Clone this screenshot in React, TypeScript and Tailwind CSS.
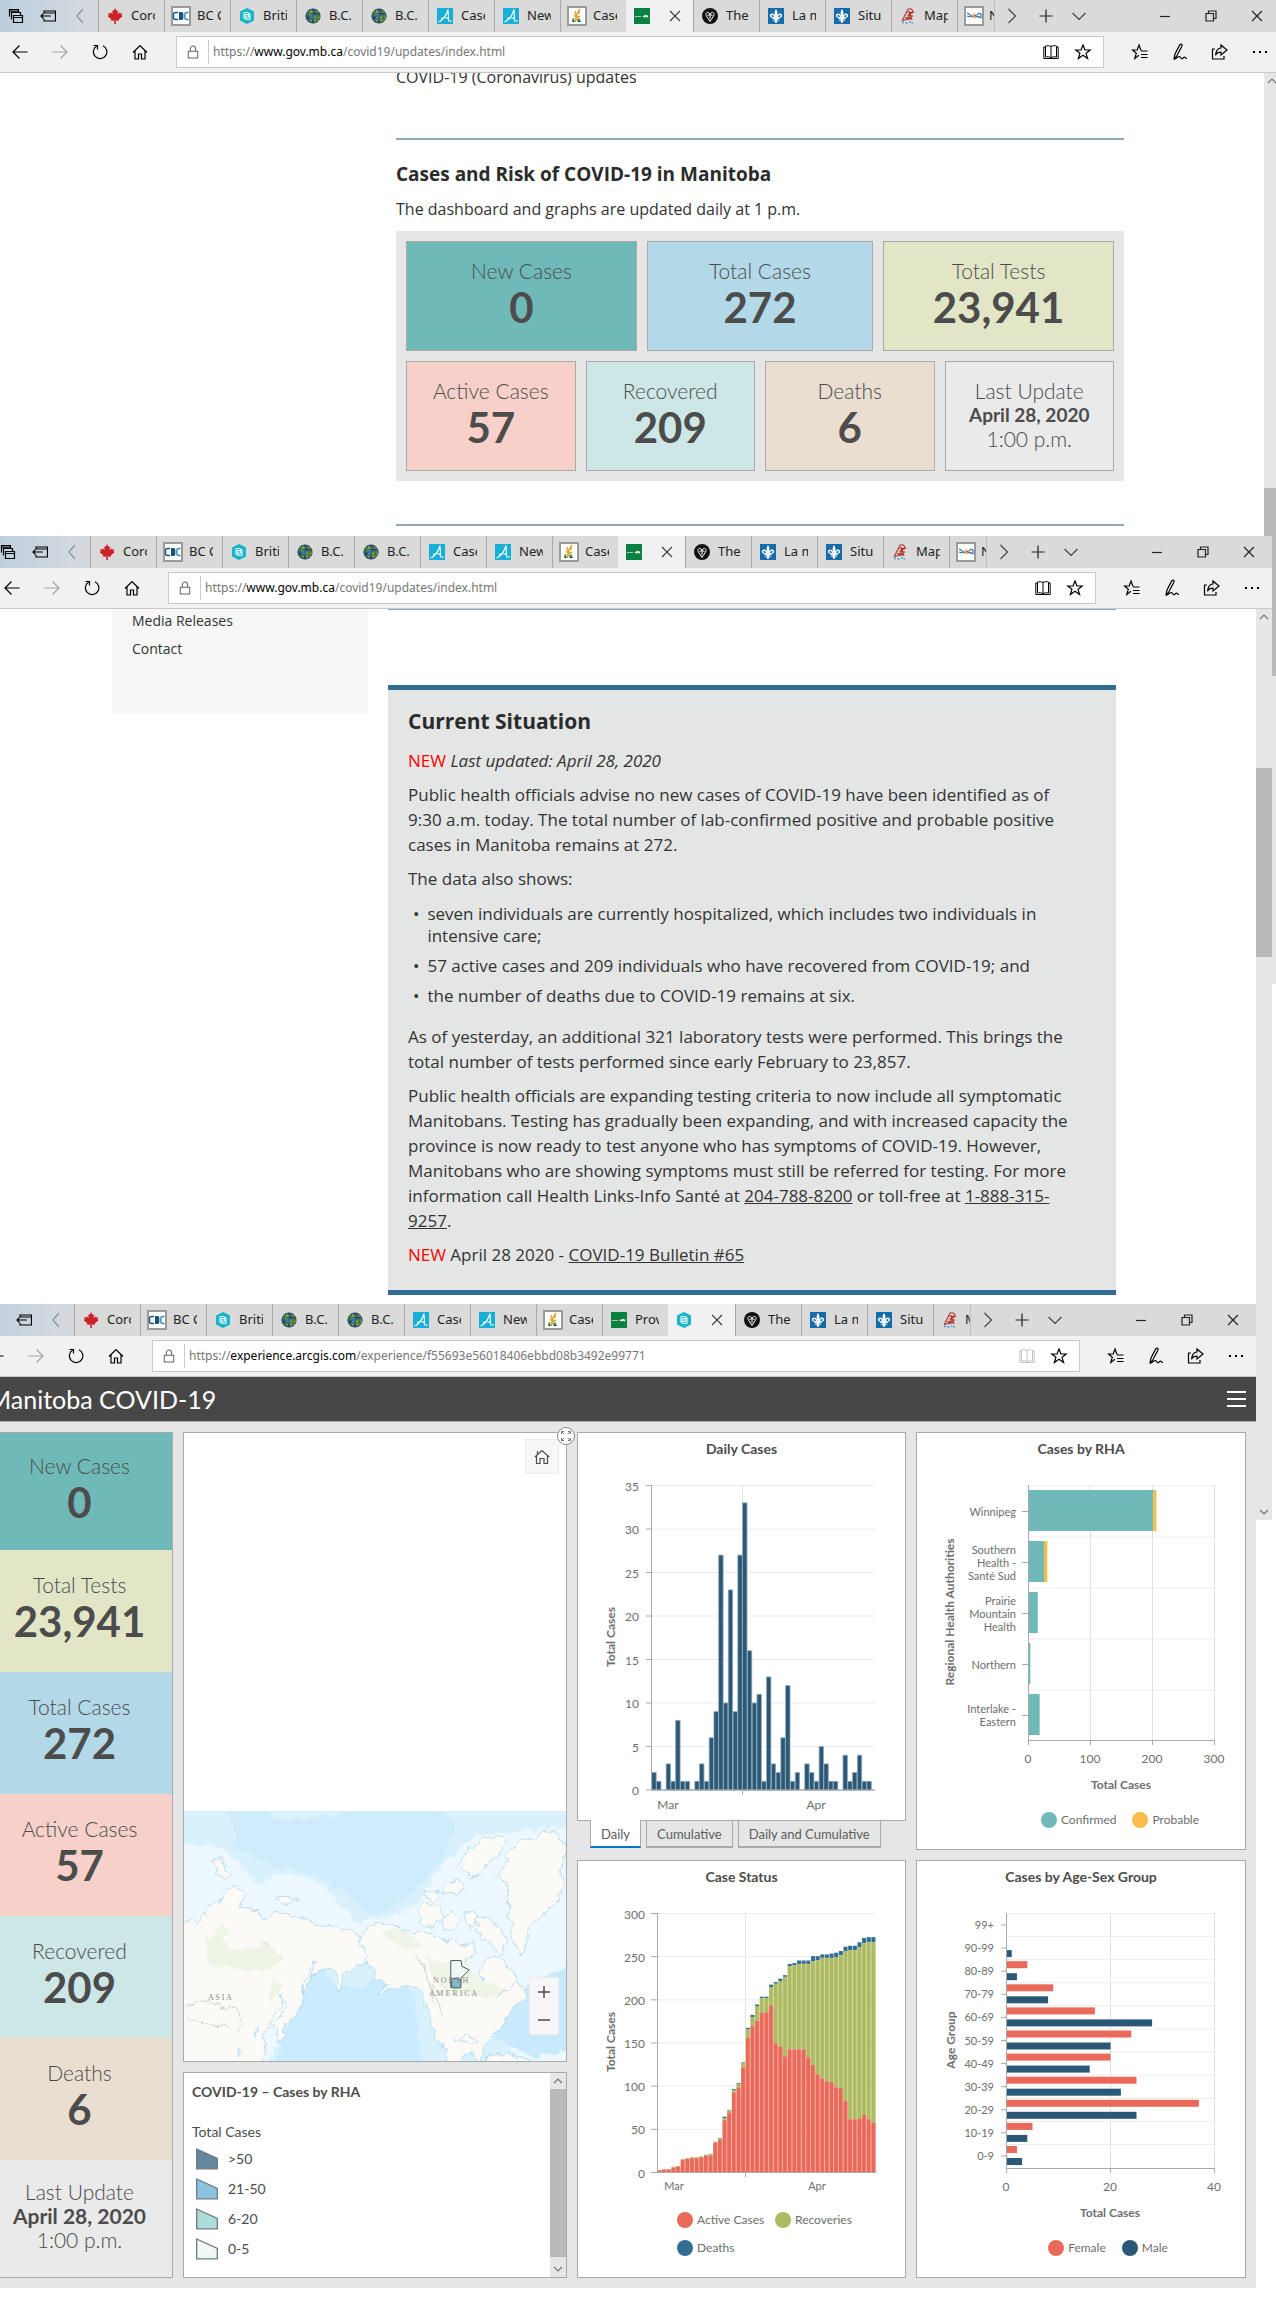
import React from "react";

/* ---------- Browser chrome ---------- */

type Icon = () => React.ReactElement;

const line = {
  fill: "none",
  stroke: "currentColor",
  strokeWidth: 1.2,
} as const;

const Maple: Icon = () => (
  <svg viewBox="0 0 16 16" className="h-4 w-4 shrink-0">
    <path
      d="M8 0l1.600 3 1.500-.8-.6 4 1.900-1.900.5 1.200 2.300-.4-.8 2.200 1.300.8-4 3.300.5 1.500-3.300-.6V16H7.300v-3.700L4 12.900l.5-1.500-4-3.300 1.300-.8L1 5.100l2.300.4.5-1.200 1.900 1.900-.6-4 1.500.8z"
      fill="#cb2026"
    />
  </svg>
);

const CdcIcon: Icon = () => (
  <svg viewBox="0 0 20 20" className="h-5 w-5 shrink-0">
    <rect x="1" y="1" width="18" height="18" fill="#fff" stroke="#9b9b9b" strokeWidth="2" />
    <path d="M7 6.500H4.500a2 2 0 0 0-2 2v3a2 2 0 0 0 2 2H7" fill="none" stroke="#19567c" strokeWidth="1.400" />
    <path d="M8 6h2.400a2 2 0 0 1 2 2v4a2 2 0 0 1-2 2H8z" fill="#19567c" />
    <path d="M17.500 6.500H15.800a2 2 0 0 0-2 2v3a2 2 0 0 0 2 2h1.700" fill="none" stroke="#3c87b6" strokeWidth="1.400" />
  </svg>
);

const HexIcon: Icon = () => (
  <svg viewBox="0 0 16 16" className="h-4 w-4 shrink-0">
    <path d="M8 0l7 3.500v9L8 16l-7-3.500v-9z" fill="#16b5c9" />
    <path d="M5 4.500v5.500l3 1.700M5 4.500h3M11 11.500V6L8 4.300M11 11.500H8M6.800 6.500h2.500v3H6.800z" fill="none" stroke="#e7fbfd" strokeWidth="1.200" />
  </svg>
);

const Globe: Icon = () => (
  <svg viewBox="0 0 16 16" className="h-4 w-4 shrink-0">
    <circle cx="8" cy="8" r="7.600" fill="#2f5878" />
    <path d="M2 5l3-3 3 1 1 3-3 2-3 1zM9 8l4-2 2 3-2 4-3 1-2-3zM10 2l3 1 1 2-3 0zM3 11l3-1 1 3-2 1z" fill="#78a83d" />
    <path d="M5 6l3-1 2 3-2 4-3-2z" fill="#3f8fc4" />
    <path d="M1 5.500h14M.5 8h15M1 10.800h14M8 .5v15M4.500 1.500q-2 6.500 0 13M11.500 1.500q2 6.500 0 13" fill="none" stroke="#1c2f3a" strokeWidth=".5" />
  </svg>
);

const AlbertaIcon: Icon = () => (
  <svg viewBox="0 0 16 16" className="h-4 w-4 shrink-0">
    <rect width="16" height="16" fill="#17afd6" />
    <path d="M1.500 14C6 12 9.500 7 11 1.500c.3 3 .3 8 .5 11 .8 1.200 2 .8 3 0M4 10.500c3-1 6-1 7.500.5" fill="none" stroke="#fff" strokeWidth="1.100" />
  </svg>
);

const WheatIcon: Icon = () => (
  <svg viewBox="0 0 20 20" className="h-5 w-5 shrink-0">
    <rect x="1" y="1" width="18" height="18" fill="#fff" stroke="#9b9b9b" strokeWidth="2" />
    <path d="M8 16c1-5 2-9 5-13M9 9l-1-4M10 8l3-2M9 11l-2-2M9 12l4-2M8.500 14l4-1" stroke="#e2a52f" strokeWidth="1.500" fill="none" />
    <path d="M12 12l2 4h-4zM6 11l2 5H5z" fill="#1a7a4a" />
  </svg>
);

const ManitobaIcon: Icon = () => (
  <svg viewBox="0 0 16 16" className="h-4 w-4 shrink-0">
    <rect width="16" height="16" fill="#0b8043" />
    <path d="M1 8.500h7" stroke="#cfe9da" strokeWidth="1" strokeDasharray="1 .4" />
    <path d="M9 7.800h1l1.500-1 1 .5 2 .4-.4 1.200H14v1h-.5V9h-3v1H10V9H9z" fill="#fff" />
  </svg>
);

const OntarioIcon: Icon = () => (
  <svg viewBox="0 0 16 16" className="h-4 w-4 shrink-0">
    <circle cx="8" cy="8" r="8" fill="#111" />
    <path d="M8 13.500L4.500 8c-1.500-2 0-4 2-3.500L8 6.500l1.500-2c2-.5 3.500 1.500 2 3.500zM8 6.500l-2.500 1M8 6.500l2.500 1M8 6.500V11" fill="none" stroke="#fff" strokeWidth="1" />
  </svg>
);

const FleurIcon: Icon = () => (
  <svg viewBox="0 0 16 16" className="h-4 w-4 shrink-0">
    <rect width="16" height="16" fill="#166ca8" />
    <path d="M8 1c1.800 2.200 1.800 4.500.6 8H7.400C6.200 5.500 6.200 3.200 8 1z" fill="#fff" />
    <path d="M9.300 9.200c.2-3 3-3.700 3.900-2.200.7 1.100-.2 2-1 1.700M6.700 9.200c-.2-3-3-3.700-3.900-2.200-.7 1.100.2 2 1 1.700" fill="none" stroke="#fff" strokeWidth="1.500" />
    <path d="M4.500 9.300h7v1.200h-7zM7.200 10.500h1.600L9.300 13 8 15l-1.300-2zM6.800 10.500L4.800 13M9.200 10.500l2 2.500" fill="#fff" stroke="#fff" strokeWidth=".7" />
  </svg>
);

const MapIcon: Icon = () => (
  <svg viewBox="0 0 16 16" className="h-4 w-4 shrink-0">
    <path d="M8 1c3-1 5 .5 5 3.500M8 1L2 13M7 4l6 .5-5 2.500 4 1-7 2 7 .5L2 12.500M9 3l3 9" fill="none" stroke="#b2322c" strokeWidth="1.100" />
    <path d="M2 14.500h2M5.500 15h2M9 14h1.500M11.500 15H13" stroke="#2f97d6" strokeWidth="1.500" />
  </svg>
);

const BannerIcon: Icon = () => (
  <svg viewBox="0 0 20 20" className="h-5 w-5 shrink-0">
    <rect x="1" y="1" width="18" height="18" fill="#fff" stroke="#9b9b9b" strokeWidth="2" />
    <path d="M3 7q2 .5 3 2t3 1M3 10q3 1.500 6 0M11 9.500q2 0 3-1.500t3 0M11 11q3-1 6 1M17 8v4" stroke="#2c6aa5" strokeWidth="1.200" fill="none" />
    <path d="M8.500 8l3 4M11.500 8l-3 4" stroke="#e98c2b" strokeWidth="1.200" />
  </svg>
);

const Cross: Icon = () => (
  <svg viewBox="0 0 12 12" className="h-3 w-3">
    <path d="M1 1l10 10M11 1L1 11" {...line} />
  </svg>
);

const Star = ({ lines = false }: { lines?: boolean }) => (
  <svg viewBox="0 0 18 18" className="h-[18px] w-[18px]">
    <path
      d={lines ? "M10.500 7H9.800L8 2 6.200 7H1.500l3.800 3.200L3.800 15.500 8 12.300M10 8h6.500M10 11.500h6.500M10 14.500h6.500" : "M9 2l2 5h5.200l-4.100 3.300 1.500 5.200L9 12.300l-4.600 3.200 1.500-5.200L1.800 7H7z"}
      {...line}
    />
  </svg>
);

const LeftIcons: Icon[] = [
  () => (
    <svg viewBox="0 0 16 16" className="h-4 w-4">
      <path d="M5.500 7.500h9v7h-9zM5.500 9.500h9M3.500 11.500v-7h9v3M1.500 8.500v-7h9v3M1.500 3.200h9" {...line} />
    </svg>
  ),
  () => (
    <svg viewBox="0 0 16 16" className="h-4 w-4">
      <path d="M4 5V3h11.500v10H4v-2M4 5h11.500M.5 8H11M3.500 5.500L1 8l2.500 2.500" {...line} />
    </svg>
  ),
  () => (
    <svg viewBox="0 0 16 16" className="h-4 w-4 text-[#8b949c]">
      <path d="M11 1L5 8l6 7" {...line} />
    </svg>
  ),
];

const NavIcons: [string, Icon][] = [
  ["Back", () => (<svg viewBox="0 0 16 16" className="h-4 w-4"><path d="M15.500 8H1M7.500 1.500L1 8l6.500 6.500" {...line} /></svg>)],
  ["Forward", () => (<svg viewBox="0 0 16 16" className="h-4 w-4 text-[#a3a3a3]"><path d="M.5 8H15M8.500 1.500L15 8l-6.500 6.500" {...line} /></svg>)],
  ["Refresh", () => (<svg viewBox="0 0 16 16" className="h-4 w-4"><path d="M11 1.800A6.700 6.700 0 1 1 4.500 2.200M1.500 1.500h4v4" {...line} /></svg>)],
  ["Home", () => (<svg viewBox="0 0 16 16" className="h-4 w-4"><path d="M1 8.500L8 1.500l7 7M3 7v8h3.500v-5h3v5H13V7" {...line} /></svg>)],
];

const ToolIcons: [string, Icon][] = [
  ["Favorites", () => <Star lines />],
  ["Notes", () => (<svg viewBox="0 0 18 18" className="h-[18px] w-[18px]"><path d="M3 16l1-5L9 1.500c1.500-1 2.500 0 2 1.500L5.500 13.500 3 16c2 .5 3-2 5-2.500 2-.3 1 2.500 3 2.200 1.500-.2 1-1.700 2.500-1.500 1.200.1 1 1.300 2.500 1.300" {...line} /></svg>)],
  ["Share", () => (<svg viewBox="0 0 18 18" className="h-[18px] w-[18px]"><path d="M4 6H1.500v10H13v-3M10 2l6 5-6 5V9.200c-3 0-4.500 1-5.500 3C5 8 7 5.200 10 5z" {...line} /></svg>)],
  ["More", () => (<svg viewBox="0 0 18 18" className="h-[18px] w-[18px]"><path d="M2 9h2M8 9h2M14 9h2" stroke="currentColor" strokeWidth="2" /></svg>)],
];

type TabItem = { icon: Icon; label: string; active?: boolean; last?: boolean };

const commonTabs: TabItem[] = [
  { icon: Maple, label: "Coro" },
  { icon: CdcIcon, label: "BC C" },
  { icon: HexIcon, label: "Briti" },
  { icon: Globe, label: "B.C." },
  { icon: Globe, label: "B.C." },
  { icon: AlbertaIcon, label: "Case" },
  { icon: AlbertaIcon, label: "New" },
  { icon: WheatIcon, label: "Case" },
];

const updatesTabs: TabItem[] = [
  ...commonTabs,
  { icon: ManitobaIcon, label: "", active: true },
  { icon: OntarioIcon, label: "The" },
  { icon: FleurIcon, label: "La m" },
  { icon: FleurIcon, label: "Situa" },
  { icon: MapIcon, label: "Map" },
  { icon: BannerIcon, label: "N", last: true },
];

const dashboardTabs: TabItem[] = [
  ...commonTabs,
  { icon: ManitobaIcon, label: "Prov" },
  { icon: HexIcon, label: "", active: true },
  { icon: OntarioIcon, label: "The" },
  { icon: FleurIcon, label: "La m" },
  { icon: FleurIcon, label: "Situa" },
  { icon: MapIcon, label: "M", last: true },
];

function Tab({ icon: TabIcon, label, active, last }: TabItem) {
  if (active) {
    return (
      <div className="flex w-[67px] shrink-0 items-center justify-between bg-[#f1f1f1] pr-3 pl-2">
        <TabIcon />
        <button aria-label="Close tab" className="text-[#444]"><Cross /></button>
      </div>
    );
  }
  return (
    <button
      className={`flex shrink-0 items-center border-l border-[#a9a9a9] ${last ? "w-[38px] border-r border-r-[#c0c0c0]" : "w-[66px] pr-2"}`}
    >
      <span className={`flex shrink-0 items-center justify-center ${last ? "w-[31px]" : "w-8"}`}><TabIcon /></span>
      <span className={`overflow-hidden text-left whitespace-nowrap ${last ? "w-[5px]" : "w-6"}`}>{label}</span>
    </button>
  );
}

type BrowserProps = { tabs: TabItem[]; url: [string, string, string]; readerOff?: boolean };

function BrowserBar({ tabs, url, readerOff }: BrowserProps) {
  return (
    <header className="font-['Noto_Sans',sans-serif] text-black">
      <div className="flex h-8 bg-[#dadada] text-[13px] text-[#222]">
        <div className="flex w-[98px] shrink-0 items-center bg-linear-to-r from-[#bccfdf] to-[#d6dade] text-black">
          {LeftIcons.map((I, i) => (
            <button key={i} aria-label={["Set aside tabs", "Restore tabs", "Scroll tabs left"][i]} className="flex w-8 justify-center"><I /></button>
          ))}
        </div>
        {tabs.map((t, i) => <Tab key={i} {...t} />)}
        <button aria-label="Scroll tabs right" className="flex w-[34px] items-center justify-center">
          <svg viewBox="0 0 16 16" className="h-4 w-4 text-[#444]"><path d="M4.500 1l7 7-7 7" {...line} /></svg>
        </button>
        <button aria-label="New tab" className="flex w-[34px] items-center justify-center">
          <svg viewBox="0 0 14 14" className="h-[14px] w-[14px]"><path d="M7 .5v13M.5 7h13" {...line} /></svg>
        </button>
        <button aria-label="Tab previews" className="flex w-8 items-center justify-center">
          <svg viewBox="0 0 14 14" className="h-[14px] w-[14px] text-[#444]"><path d="M.5 4L7 10.500 13.500 4" {...line} /></svg>
        </button>
        <div className="ml-auto flex">
          <button aria-label="Minimize" className="flex w-[46px] items-center justify-center"><svg viewBox="0 0 12 12" className="h-3 w-3"><path d="M1 6.500h10" {...line} /></svg></button>
          <button aria-label="Restore" className="flex w-[46px] items-center justify-center"><svg viewBox="0 0 12 12" className="h-3 w-3"><path d="M1 3.500h7.500V11H1zM3.500 3.500V1H11v7.500H8.500" {...line} /></svg></button>
          <button aria-label="Close" className="flex w-[46px] items-center justify-center"><Cross /></button>
        </div>
      </div>
      <div className="flex h-[41px] items-center border-b border-[#c9c9c9] bg-[#f1f1f1]">
        {NavIcons.map(([name, I]) => (
          <button key={name} aria-label={name} className="flex w-10 shrink-0 justify-center"><I /></button>
        ))}
        <div className="mx-4 flex h-8 min-w-0 flex-1 items-center border border-[#c9c9c9] bg-white pr-1">
          <span className="flex h-6 w-8 shrink-0 items-center justify-center border-r border-[#c9c9c9] text-[#666]">
            <svg viewBox="0 0 14 16" className="h-[14px] w-3"><path d="M1.500 7h11v8h-11zM4 7V4a3 3 0 0 1 6 0v3" {...line} /></svg>
          </span>
          <div role="textbox" aria-label="Address" tabIndex={0} className="min-w-0 flex-1 truncate pl-1 text-[12px] text-[#777]">
            {url[0]}<span className="text-black">{url[1]}</span>{url[2]}
          </div>
          <button aria-label="Reading view" className={`flex w-8 justify-center ${readerOff ? "text-[#c4c4c4]" : ""}`}>
            <svg viewBox="0 0 16 16" className="h-4 w-4"><path d="M8 2.500C6 1.500 4 1.500 2.500 2v11c1.500-.4 4-.4 5.500.7 1.500-1.100 4-1.100 5.500-.7V2C12 1.500 10 1.500 8 2.500zm0 0v11M2.500 3H.8v11.500h14.400V3h-1.700" {...line} strokeWidth={1} /></svg>
          </button>
          <button aria-label="Add to favorites" className="flex w-8 justify-center"><Star /></button>
        </div>
        {ToolIcons.map(([name, I]) => (
          <button key={name} aria-label={name} className="flex w-10 shrink-0 justify-center"><I /></button>
        ))}
      </div>
    </header>
  );
}

const ScrollArrow = ({ down = false }: { down?: boolean }) => (
  <svg viewBox="0 0 16 16" className="h-4 w-4 shrink-0 text-[#777]">
    <path d={down ? "M4 6l4 4 4-4" : "M4 10l4-4 4 4"} {...line} />
  </svg>
);

/* ---------- Summary cards ---------- */

type CardData = { label: string; value: string; time?: string; className: string };

const card: Record<string, CardData> = {
  fresh: { label: "New Cases", value: "0", className: "bg-[#6fbab8]" },
  cases: { label: "Total Cases", value: "272", className: "bg-[#b3d8e8]" },
  tests: { label: "Total Tests", value: "23,941", className: "bg-[#e2e6c7]" },
  active: { label: "Active Cases", value: "57", className: "bg-[#f7d0ca]" },
  recovered: { label: "Recovered", value: "209", className: "bg-[#cde7e6]" },
  deaths: { label: "Deaths", value: "6", className: "bg-[#e9decf]" },
  update: { label: "Last Update", value: "April 28, 2020", time: "1:00 p.m.", className: "bg-[#eaeaea]" },
};

function CardText({ data, wide = false }: { data: CardData; wide?: boolean }) {
  return (
    <div className="text-center font-['Lato',sans-serif] text-[21px] leading-6 text-[#4c4c4c]">
      <p className="font-light">{data.label}</p>
      {data.time ? (
        <>
          <p className={`font-bold whitespace-nowrap ${wide ? "text-[21px]" : "text-[19px]"}`}>{data.value}</p>
          <p className="font-light">{data.time}</p>
        </>
      ) : (
        <p className="text-[42px] leading-[48px] font-bold">{data.value}</p>
      )}
    </div>
  );
}

const Card = ({ data }: { data: CardData }) => (
  <div className={`h-[110px] border border-[#a9a9a9] pt-[17px] ${data.className}`}>
    <CardText data={data} />
  </div>
);

/* ---------- Charts ---------- */

const Title = ({ children }: { children: React.ReactNode }) => (
  <h3 className="h-[42px] pt-[6px] text-center text-[14px] leading-5 font-bold text-[#4c4c4c]">{children}</h3>
);

const Panel = ({ children, className = "" }: { children: React.ReactNode; className?: string }) => (
  <section className={`border border-[#a9a9a9] bg-white ${className}`}>{children}</section>
);

const Dot = ({ color, label }: { color: string; label: string }) => (
  <li className="flex items-center gap-1 text-[12px] leading-4 text-[#6e6e6e]">
    <span className={`h-4 w-4 rounded-full ${color}`} />
    {label}
  </li>
);

const AxisName = ({ x, y, children }: { x: number; y: number; children: string }) => (
  <text x={x} y={y} transform={`rotate(-90 ${x} ${y})`} textAnchor="middle" className="fill-[#6e6e6e] text-[12px] font-bold">{children}</text>
);

const daily = [2, 1, 0, 3, 1, 8, 1, 1, 0, 1, 3, 1, 6, 9, 27, 10, 23, 9, 27, 33, 16, 10, 11, 1, 13, 3, 2, 6, 12, 1, 2, 0, 3, 2, 1, 5, 3, 1, 1, 0, 4, 1, 2, 4, 1, 1];

function DailyChart() {
  const step = 4.78;
  return (
    <svg viewBox="0 0 327 345" className="block w-full fill-[#6e6e6e] text-[12px]">
      {[0, 5, 10, 15, 20, 25, 30, 35].map((v) => {
        const y = 315 - v * 8.7;
        return (
          <g key={v}>
            <path d={`M74 ${y}H297`} stroke={v ? "#ececec" : "#a9a9a9"} />
            <path d={`M68 ${y}H74`} stroke="#a9a9a9" />
            <text x="61" y={y + 5} textAnchor="end">{v}</text>
          </g>
        );
      })}
      <path d="M164.500 10V315" stroke="#e4e4e4" />
      {daily.map((v, i) => v > 0 && (
        <rect key={i} x={73.8 + i * step} y={315 - v * 8.7} width={step - 0.4} height={v * 8.7} fill="#2a5876" stroke="#8fa9b9" strokeWidth=".8" />
      ))}
      <path d="M73.500 10V315H297M164.500 315v5" fill="none" stroke="#a9a9a9" />
      <text x="90" y="334" textAnchor="middle">Mar</text>
      <text x="238" y="334" textAnchor="middle">Apr</text>
      <AxisName x={37} y={162}>Total Cases</AxisName>
    </svg>
  );
}

const rha: [string[], number, number][] = [
  [["Winnipeg"], 201, 5],
  [["Southern", "Health -", "Santé Sud"], 25, 5],
  [["Prairie", "Mountain", "Health"], 15, 0],
  [["Northern"], 3, 0],
  [["Interlake -", "Eastern"], 18, 0],
];

function RhaChart() {
  return (
    <svg viewBox="0 0 328 325" className="block w-full fill-[#6e6e6e] text-[12px]">
      {[0, 100, 200, 300].map((v) => (
        <g key={v}>
          <path d={`M${111.5 + v * 0.62} 10V265`} stroke="#e0e0e0" />
          <path d={`M${111.5 + v * 0.62} 265v5`} stroke="#a9a9a9" />
          <text x={111 + v * 0.62} y="288" textAnchor="middle">{v}</text>
        </g>
      ))}
      {rha.map(([names, confirmed, probable], i) => {
        const top = 10.5 + i * 51;
        return (
          <g key={i}>
            <path d={`M111 ${top + 0.5}H297`} stroke="#ececec" />
            <path d={`M105 ${top + 26}H111`} stroke="#a9a9a9" />
            <rect x="111.500" y={top + 4.5} width={confirmed * 0.62} height="41" fill="#6fbab8" />
            <rect x={111.5 + confirmed * 0.62} y={top + 4.5} width={probable * 0.66} height="41" fill="#f7bc4b" />
            {names.map((n, j) => (
              <text key={n} x="99" y={top + 30 + (j - (names.length - 1) / 2) * 13} textAnchor="end" className="text-[11px]">{n}</text>
            ))}
          </g>
        );
      })}
      <path d="M111.500 10V265.500H297" fill="none" stroke="#a9a9a9" />
      <text x="204" y="314" textAnchor="middle" className="font-bold">Total Cases</text>
      <AxisName x={37} y={137}>Regional Health Authorities</AxisName>
    </svg>
  );
}

const active = [2, 3, 3, 5, 6, 14, 15, 16, 16, 17, 19, 19, 34, 37, 60, 69, 92, 98, 121, 155, 169, 175, 184, 185, 193, 149, 145, 134, 142, 142, 142, 142, 133, 124, 113, 108, 105, 104, 98, 97, 82, 61, 61, 62, 66, 61, 57];
const resolved = [2, 3, 3, 6, 7, 15, 16, 17, 17, 18, 20, 21, 35, 38, 62, 71, 95, 102, 126, 165, 179, 192, 201, 201, 214, 218, 221, 226, 238, 239, 241, 241, 241, 244, 245, 248, 248, 248, 249, 251, 256, 257, 257, 260, 265, 266, 266];
const total = [2, 3, 3, 6, 7, 15, 16, 17, 17, 18, 20, 21, 35, 39, 64, 72, 96, 103, 127, 167, 182, 194, 203, 203, 217, 220, 224, 228, 241, 242, 245, 245, 245, 250, 250, 252, 252, 253, 254, 256, 261, 262, 262, 266, 271, 272, 272];

function StatusChart() {
  const step = 4.65;
  const k = 259 / 300;
  return (
    <svg viewBox="0 0 327 305" className="block w-full fill-[#6e6e6e] text-[12px]">
      {[0, 50, 100, 150, 200, 250, 300].map((v) => {
        const y = 269.5 - v * k;
        return (
          <g key={v}>
            <path d={`M79 ${y}H297`} stroke={v ? "#ececec" : "#a9a9a9"} />
            <path d={`M73 ${y}H79`} stroke="#a9a9a9" />
            <text x="67" y={y + 5} textAnchor="end">{v}</text>
          </g>
        );
      })}
      <path d="M167.500 10V269" stroke="#e4e4e4" />
      {total.map((t, i) => {
        const x = 79.5 + i * step;
        return (
          <g key={i}>
            <rect x={x} y={269 - t * k} width={step - 0.6} height={(t - resolved[i]) * k} fill="#326e92" />
            <rect x={x} y={269 - resolved[i] * k} width={step} height={(resolved[i] - active[i]) * k} fill="#d3d9a9" />
            <rect x={x} y={269 - resolved[i] * k} width={step - 0.9} height={(resolved[i] - active[i]) * k} fill="#aebb62" />
            <rect x={x} y={269 - active[i] * k} width={step} height={active[i] * k} fill="#f3b0a5" />
            <rect x={x} y={269 - active[i] * k} width={step - 0.9} height={active[i] * k} fill="#e96a5b" />
          </g>
        );
      })}
      <path d="M79.500 10V269.500H298M167.500 269v5" fill="none" stroke="#a9a9a9" />
      <text x="96" y="287" textAnchor="middle" className="text-[11px]">Mar</text>
      <text x="239" y="287" textAnchor="middle" className="text-[11px]">Apr</text>
      <AxisName x={37} y={139}>Total Cases</AxisName>
    </svg>
  );
}

const ages: [string, number, number][] = [
  ["99+", 0, 0], ["90-99", 0, 1], ["80-89", 4, 2], ["70-79", 9, 8], ["60-69", 17, 28], ["50-59", 24, 20],
  ["40-49", 20, 16], ["30-39", 25, 22], ["20-29", 37, 25], ["10-19", 5, 4], ["0-9", 2, 3],
];

function AgeChart() {
  return (
    <svg viewBox="0 0 328 325" className="block w-full fill-[#6e6e6e] text-[12px]">
      {[0, 20, 40].map((v) => (
        <g key={v}>
          <path d={`M${89.5 + v * 5.2} 10V265`} stroke="#e0e0e0" />
          <path d={`M${89.5 + v * 5.2} 265v5`} stroke="#a9a9a9" />
          <text x={89 + v * 5.2} y="288" textAnchor="middle">{v}</text>
        </g>
      ))}
      {ages.map(([name, f, m], i) => {
        const top = 10.5 + i * 23.1;
        return (
          <g key={name}>
            <path d={`M89 ${top}H297`} stroke="#ececec" />
            <path d={`M84 ${top + 11.5}H89`} stroke="#a9a9a9" />
            <rect x="89.500" y={top + 1.5} width={f * 5.2} height="7" fill="#e96a5b" />
            <rect x="89.500" y={top + 13.5} width={m * 5.2} height="7" fill="#2a5876" />
            <text x="77" y={top + 15.5} textAnchor="end" className="text-[11px]">{name}</text>
          </g>
        );
      })}
      <path d="M89.500 10V265.500H297" fill="none" stroke="#a9a9a9" />
      <text x="193" y="314" textAnchor="middle" className="font-bold">Total Cases</text>
      <AxisName x={38} y={137}>Age Group</AxisName>
    </svg>
  );
}

/* ---------- Map ---------- */

function WorldMap() {
  const coast = { fill: "#fbfaf7", stroke: "#b5dcee", strokeWidth: 1, vectorEffect: "non-scaling-stroke" } as const;
  return (
    <svg viewBox="0 0 382 250" className="block w-full bg-[#d9f1fd]">
      <filter id="rough" x="0" y="0" width="100%" height="100%">
        <feTurbulence type="fractalNoise" baseFrequency="0.09" numOctaves="3" seed="4" result="noise" />
        <feDisplacementMap in="SourceGraphic" in2="noise" scale="11" xChannelSelector="R" yChannelSelector="G" />
      </filter>
      <g filter="url(#rough)">
        <g transform="scale(0.37 0.582) translate(-497 -707)">
          <path d="M440 650H1600V1200H440z" fill="#d9f1fd" />
          <path d="M440 760L600 770 690 830 760 815 830 820 900 850 960 900 1040 890 1130 870 1190 800 1290 750 1600 730V1200H1440L1330 1060 1200 1100 1120 1000 1040 960 960 960 880 950 800 1040 760 1090 690 1200H440z" fill="#ecf8fe" />
          <path d="M590 650L760 725 900 715 1080 650 1230 730 1200 790 1110 850 1010 890 940 850 850 815 740 800 640 770z" fill="#cfecfd" />
          <path d="M850 960L900 1005 980 1010 1060 965 1120 1030 1150 1200H720L780 1060z" fill="#cbebfe" />
          <path d="M1600 960L1440 1000 1330 1050 1340 1100 1440 1130 1600 1110z" fill="#c9eafd" />
          <path {...coast} d="M440 905l82-12 15 10 20-25 30-14 20-20 35-5 20 14-10 18 40 8 20 14 30-10 40 5 45 2 25 14 40-4 60 12 40 16 25 12-30 10 10 14-35 10-28 14-15 28-14-6 8-24-20-6-22 4-36 6-20 26-4 34-22 14-20 8-4 28-14 2-6-20-24-4-8 18 10 24-16 26-26 16-14 26-10-2-22-20-14 12-16-24-30-8-18 30-80 6z" />
          <path {...coast} d="M972 935l16-24 22-12 38 3 40 8 34 6 40 2 36 14 24-4 22 10 30-8 14 12-12 14-24 12-6 22 26 12 24 4 8 18 12-12-6-26 4-20 30 6 22 16 24-2 18 26 22 18-30 10-24 10-8 18-22 8-18 22-24 16-4 26-20-16-22 2-18 16 2 18 16 10 20-2 12 12 20 10h-24l-40-14-26-20-18-38-26-24-14-40-12-24-20-18-36-8-28 8-40 10 16-16-22-10z" />
          <path {...coast} d="M1338 822l24-22 10-24 30-16 50-12 44-6 26 14 4 24-8 26 4 34-16 26-30 14-26 14-24 18-12 42-18-6-14-40-8-36-2-36-18-18z" />
          <path {...coast} d="M1240 800l30-30 30-14 40-2 26 8-14 22-34 12-22 18-30 10zM1130 880l20-14 34 4 14 14-20 20-40-4zM1190 890l34-10 20 14-20 14-26 4zM1200 830l34-6 18 16-26 10-30-4zM1290 890l34 4 26 14 20 28-16 18-34-18-26-20zM1150 850l28-10 22 10-30 10zM1255 885l25-6 10 16-20 14zM578 795l18-6 14 16 22 12-20 6-24-8zM745 860l24-8 34 8-26 8zM1296 980l28-24 30 6 24 20 16 10-20 22-38 10-24-20z" />
          <path {...coast} d="M762 1025l10 20-10 16-26 16-8-4 22-18zM845 968l8-2-14 30-12 18-8-2 16-24zM690 1085l6-4-4 14zM640 1110l10 6-6 14zM1230 1098l28-8 34 12-10 6zM1320 1130l30-8 60 8 30 10h-120z" />
          <path d="M555 925l50-20 20 14-30 12 60 16 60-10 50 22-30 18-70 6-60-10-40 6zM740 990l24 14-10 24-28 6zM1030 915l60-4 50 24-20 14-50-14zM1150 955l50 14 60-2 40 30 60 16-40 18-60-12-30 4-50-24z" fill="#eff5e6" />
          <path d="M500 1044l38-14 52 10 56 12 20 20-24 14M510 1062l50 12 60 6M700 930l40 14M1120 950l30 40 22 44M1140 970l32 50 24 40" fill="none" stroke="#d9d2ca" strokeWidth="1" vectorEffect="non-scaling-stroke" />
        </g>
      </g>
      <g transform="scale(0.37 0.582) translate(-497 -707)" stroke="#4c5a60">
        <path d="M1218 964h28l2 10 20 6-22 14-4 16h-24z" fill="#eef7f4" vectorEffect="non-scaling-stroke" />
        <path d="M1219 996l14-2 13 4-1 13h-24z" fill="#7db8c4" vectorEffect="non-scaling-stroke" />
      </g>
      <g className="fill-[#8b8b8b] font-['Liberation_Serif',serif] text-[8px]">
        <text x="24" y="189">A S I A</text>
        <text x="249" y="172">N O R T H</text>
        <text x="245" y="185">A M E R I C A</text>
      </g>
    </svg>
  );
}

const legend: [string, string][] = [[">50", "#64869f"], ["21-50", "#8bc3e0"], ["6-20", "#abdcd8"], ["0-5", "#eff8f5"]];

function MapColumn() {
  return (
    <div className="flex min-w-0 flex-col gap-[10px]">
      <Panel className="relative flex flex-1 flex-col justify-end">
        <WorldMap />
        <button aria-label="Default extent" className="absolute top-[6px] right-[7px] flex h-[35px] w-[34px] items-center justify-center border border-[#ebebeb] bg-[#f7f7f7] text-[#4c4c4c]">
          <svg viewBox="0 0 16 16" className="h-[18px] w-4"><path d="M.8 8L8 1.500 15.200 8M2.500 6.800V14.500H6V9.500h4v5h3.500V6.800M3.500 5.500V2" {...line} /></svg>
        </button>
        <button aria-label="Expand" className="absolute -top-[6px] -right-[9px] flex h-[18px] w-[18px] items-center justify-center rounded-full border border-[#8a8a8a] bg-white text-[#777]">
          <svg viewBox="0 0 12 12" className="h-3 w-3"><path d="M1.500 4V1.500H4M8 1.500h2.500V4M10.500 8v2.500H8M4 10.500H1.500V8M1.500 1.500l2.700 2.700M10.500 1.500L7.800 4.200M10.500 10.500L7.800 7.800M1.500 10.500l2.700-2.700" {...line} strokeWidth={1} /></svg>
        </button>
        <div className="absolute right-[7px] bottom-[26px] flex w-[30px] flex-col border border-[#ebebeb] bg-[#f7f7f7] text-[#4c4c4c]">
          <button aria-label="Zoom in" className="flex h-7 items-center justify-center"><svg viewBox="0 0 12 12" className="h-3 w-3"><path d="M6 0v12M0 6h12" stroke="currentColor" strokeWidth="1.500" /></svg></button>
          <button aria-label="Zoom out" className="flex h-7 items-center justify-center"><svg viewBox="0 0 12 12" className="h-3 w-3"><path d="M0 6h12" stroke="currentColor" strokeWidth="1.500" /></svg></button>
        </div>
      </Panel>
      <Panel className="flex h-[206px]">
        <div className="flex-1 pl-2 text-[14px] leading-5 text-[#4c4c4c]">
          <h3 className="mt-[9px] font-bold">COVID-19 – Cases by RHA</h3>
          <p className="mt-5">Total Cases</p>
          <ul className="mt-[2px] pl-1">
            {legend.map(([name, color]) => (
              <li key={name} className="flex h-[30px] items-center gap-[10px]">
                <svg viewBox="0 0 22 22" className="h-[22px] w-[22px]"><path d="M.7 1l20.600 9.500V20.800H.7z" fill={color} stroke="#6e7a80" strokeWidth="1.300" /></svg>
                {name}
              </li>
            ))}
          </ul>
        </div>
        <div className="flex w-4 flex-col bg-[#e6e6e6]">
          <ScrollArrow />
          <div className="mb-1 flex-1 bg-[#b9b9b9]" />
          <ScrollArrow down />
        </div>
      </Panel>
    </div>
  );
}

/* ---------- Pages ---------- */

function RiskPage() {
  return (
    <div className="overflow-hidden">
      <div className="-mr-1">
        <BrowserBar tabs={updatesTabs} url={["https://", "www.gov.mb.ca", "/covid19/updates/index.html"]} />
        <div className="flex">
          <main className="flex-1 overflow-hidden font-['Open_Sans',sans-serif] text-[16px] leading-[25px] text-[#333]">
            <div className="mx-auto max-w-[1024px] pr-5 pb-[10px] pl-[276px]">
              <p className="-mt-2">COVID-19 (Coronavirus) updates</p>
              <hr className="mt-12 border-t-2 border-[#93a9ba]" />
              <h2 className="mt-5 text-[19px] leading-7 font-bold text-[#2b2b2b]">Cases and Risk of COVID-19 in Manitoba</h2>
              <p className="mt-[9px]">The dashboard and graphs are updated daily at 1 p.m.</p>
              <div className="mt-[9px] space-y-[10px] bg-[#e6e6e6] p-[10px]">
                <div className="grid grid-cols-[231fr_226fr_231fr] gap-[10px]">
                  <Card data={card.fresh} /><Card data={card.cases} /><Card data={card.tests} />
                </div>
                <div className="grid grid-cols-4 gap-[10px]">
                  <Card data={card.active} /><Card data={card.recovered} /><Card data={card.deaths} /><Card data={card.update} />
                </div>
              </div>
              <hr className="mt-[43px] border-t-2 border-[#93a9ba]" />
            </div>
          </main>
          <div className="flex w-4 flex-col justify-between bg-[#e6e6e6]">
            <ScrollArrow />
            <div className="h-12 bg-[#b9b9b9]" />
          </div>
        </div>
      </div>
    </div>
  );
}

const New = () => <span className="text-[#f00]">NEW</span>;

function SituationPage() {
  return (
    <div className="flex">
      <div className="min-w-0 flex-1 overflow-hidden">
        <div className="-ml-2">
          <BrowserBar tabs={updatesTabs} url={["https://", "www.gov.mb.ca", "/covid19/updates/index.html"]} />
          <div className="flex">
            <main className="flex-1 font-['Open_Sans',sans-serif] text-[17px] leading-[25px] text-[#333]">
              <div className="mx-auto grid max-w-[1024px] grid-cols-[256px_1fr] items-start gap-5 pr-5 pb-[9px]">
                <nav className="flex flex-col gap-1 bg-[#f7f7f7] pb-[53px] pl-5 text-[14px] leading-6">
                  <a href="#media">Media Releases</a>
                  <a href="#contact">Contact</a>
                </nav>
                <div>
                  <hr className="border-[#93a9ba]" />
                  <article className="mt-[75px] border-y-[5px] border-[#326e92] bg-[#e4e6e5] pt-[17px] pr-[38px] pb-[23px] pl-5">
                    <h2 className="text-[21px] leading-7 font-bold text-[#2b2b2b]">Current Situation</h2>
                    <p className="mt-[13px]"><New /> <em>Last updated: April 28, 2020</em></p>
                    <p className="mt-[9px]">Public health officials advise no new cases of COVID-19 have been identified as of 9:30 a.m. today. The total number of lab-confirmed positive and probable positive cases in Manitoba remains at 272.</p>
                    <p className="mt-[9px]">The data also shows:</p>
                    <ul className="mt-3 space-y-2 leading-[22px]">
                      {[
                        "seven individuals are currently hospitalized, which includes two individuals in intensive care;",
                        "57 active cases and 209 individuals who have recovered from COVID-19; and",
                        "the number of deaths due to COVID-19 remains at six.",
                      ].map((t) => (
                        <li key={t} className="flex gap-2 pl-[5px]"><span>•</span><span>{t}</span></li>
                      ))}
                    </ul>
                    <p className="mt-[17px]">As of yesterday, an additional 321 laboratory tests were performed. This brings the total number of tests performed since early February to 23,857.</p>
                    <p className="mt-[9px]">Public health officials are expanding testing criteria to now include all symptomatic Manitobans. Testing has gradually been expanding, and with increased capacity the province is now ready to test anyone who has symptoms of COVID-19. However, Manitobans who are showing symptoms must still be referred for testing. For more information call Health Links-Info Santé at <a href="tel:2047888200" className="underline">204-788-8200</a> or toll-free at <a href="tel:18883159257" className="underline">1-888-315-9257</a>.</p>
                    <p className="mt-[9px]"><New /> April 28 2020 - <a href="#bulletin" className="underline">COVID-19 Bulletin #65</a></p>
                  </article>
                </div>
              </div>
            </main>
            <div className="flex w-4 flex-col bg-[#e6e6e6]">
              <ScrollArrow />
              <div className="mt-[143px] h-[189px] bg-[#b9b9b9]" />
            </div>
          </div>
        </div>
      </div>
      <div className="w-1">
        <div className="h-[140px] bg-[#b9b9b9]" />
        <div className="h-[308px] bg-[#e6e6e6]" />
      </div>
    </div>
  );
}

const figures = [card.fresh, card.tests, card.cases, card.active, card.recovered, card.deaths, card.update];

function DashboardPage() {
  return (
    <div className="flex">
      <div className="min-w-0 flex-1 overflow-hidden">
        <div className="-ml-6 font-['Lato',sans-serif]">
          <BrowserBar tabs={dashboardTabs} readerOff url={["https://", "experience.arcgis.com", "/experience/f55693e56018406ebbd08b3492e99771"]} />
          <div className="flex h-[45px] items-center justify-between border-b border-[#a9a9a9] bg-[#474747] pr-[10px] pl-3 text-white">
            <h1 className="text-[25px] leading-8">Manitoba COVID-19</h1>
            <button aria-label="Menu" className="flex w-[19px] flex-col gap-[5px]">
              <span className="h-[2px] bg-white" /><span className="h-[2px] bg-white" /><span className="h-[2px] bg-white" />
            </button>
          </div>
          <main className="grid grid-cols-[187fr_384fr_329fr_330fr] gap-[10px] bg-[#e6e6e6] p-[10px]">
            <div className="flex flex-col border border-[#a9a9a9]">
              {figures.map((f, i) => (
                <div key={f.label} className={`flex flex-col justify-center pb-1 ${i === 0 || i === 6 ? "flex-[117]" : "flex-[122]"} ${f.className}`}>
                  <CardText data={f} wide />
                </div>
              ))}
            </div>
            <MapColumn />
            <div className="flex min-w-0 flex-col gap-[10px]">
              <div className="flex h-[418px] flex-col">
                <Panel><Title>Daily Cases</Title><DailyChart /></Panel>
                <div role="tablist" className="relative -mt-px flex gap-[5px] px-[13px] text-[13px] leading-6 whitespace-nowrap text-[#5c5c5c]">
                  <button role="tab" aria-selected="true" className="border-x border-b-2 border-x-[#a9a9a9] border-b-[#0079c1] bg-white px-[10px] pt-[2px]">Daily</button>
                  <button role="tab" aria-selected="false" className="border border-b-2 border-[#a9a9a9] px-[10px]">Cumulative</button>
                  <button role="tab" aria-selected="false" className="border border-b-2 border-[#a9a9a9] px-[10px]">Daily and Cumulative</button>
                </div>
              </div>
              <Panel className="h-[418px]">
                <Title>Case Status</Title>
                <StatusChart />
                <ul className="grid grid-cols-[98px_1fr] gap-y-3 pt-1 pl-[99px]">
                  <Dot color="bg-[#e96a5b]" label="Active Cases" />
                  <Dot color="bg-[#aebb62]" label="Recoveries" />
                  <Dot color="bg-[#326e92]" label="Deaths" />
                </ul>
              </Panel>
            </div>
            <div className="flex min-w-0 flex-col gap-[10px]">
              <Panel className="h-[418px]">
                <Title>Cases by RHA</Title>
                <RhaChart />
                <ul className="flex justify-center gap-4 pt-3 pl-[78px]">
                  <Dot color="bg-[#6fbab8]" label="Confirmed" />
                  <Dot color="bg-[#f7bc4b]" label="Probable" />
                </ul>
              </Panel>
              <Panel className="h-[418px]">
                <Title>Cases by Age-Sex Group</Title>
                <AgeChart />
                <ul className="flex justify-center gap-4 pt-3 pl-[54px]">
                  <Dot color="bg-[#e96a5b]" label="Female" />
                  <Dot color="bg-[#2a5876]" label="Male" />
                </ul>
              </Panel>
            </div>
          </main>
        </div>
      </div>
      <div className="w-5">
        <div className="flex h-[216px] w-4 flex-col justify-end bg-[#e6e6e6]"><ScrollArrow down /></div>
      </div>
    </div>
  );
}

export default function App() {
  return (
    <div className="bg-white pb-6">
      <RiskPage />
      <SituationPage />
      <DashboardPage />
    </div>
  );
}
